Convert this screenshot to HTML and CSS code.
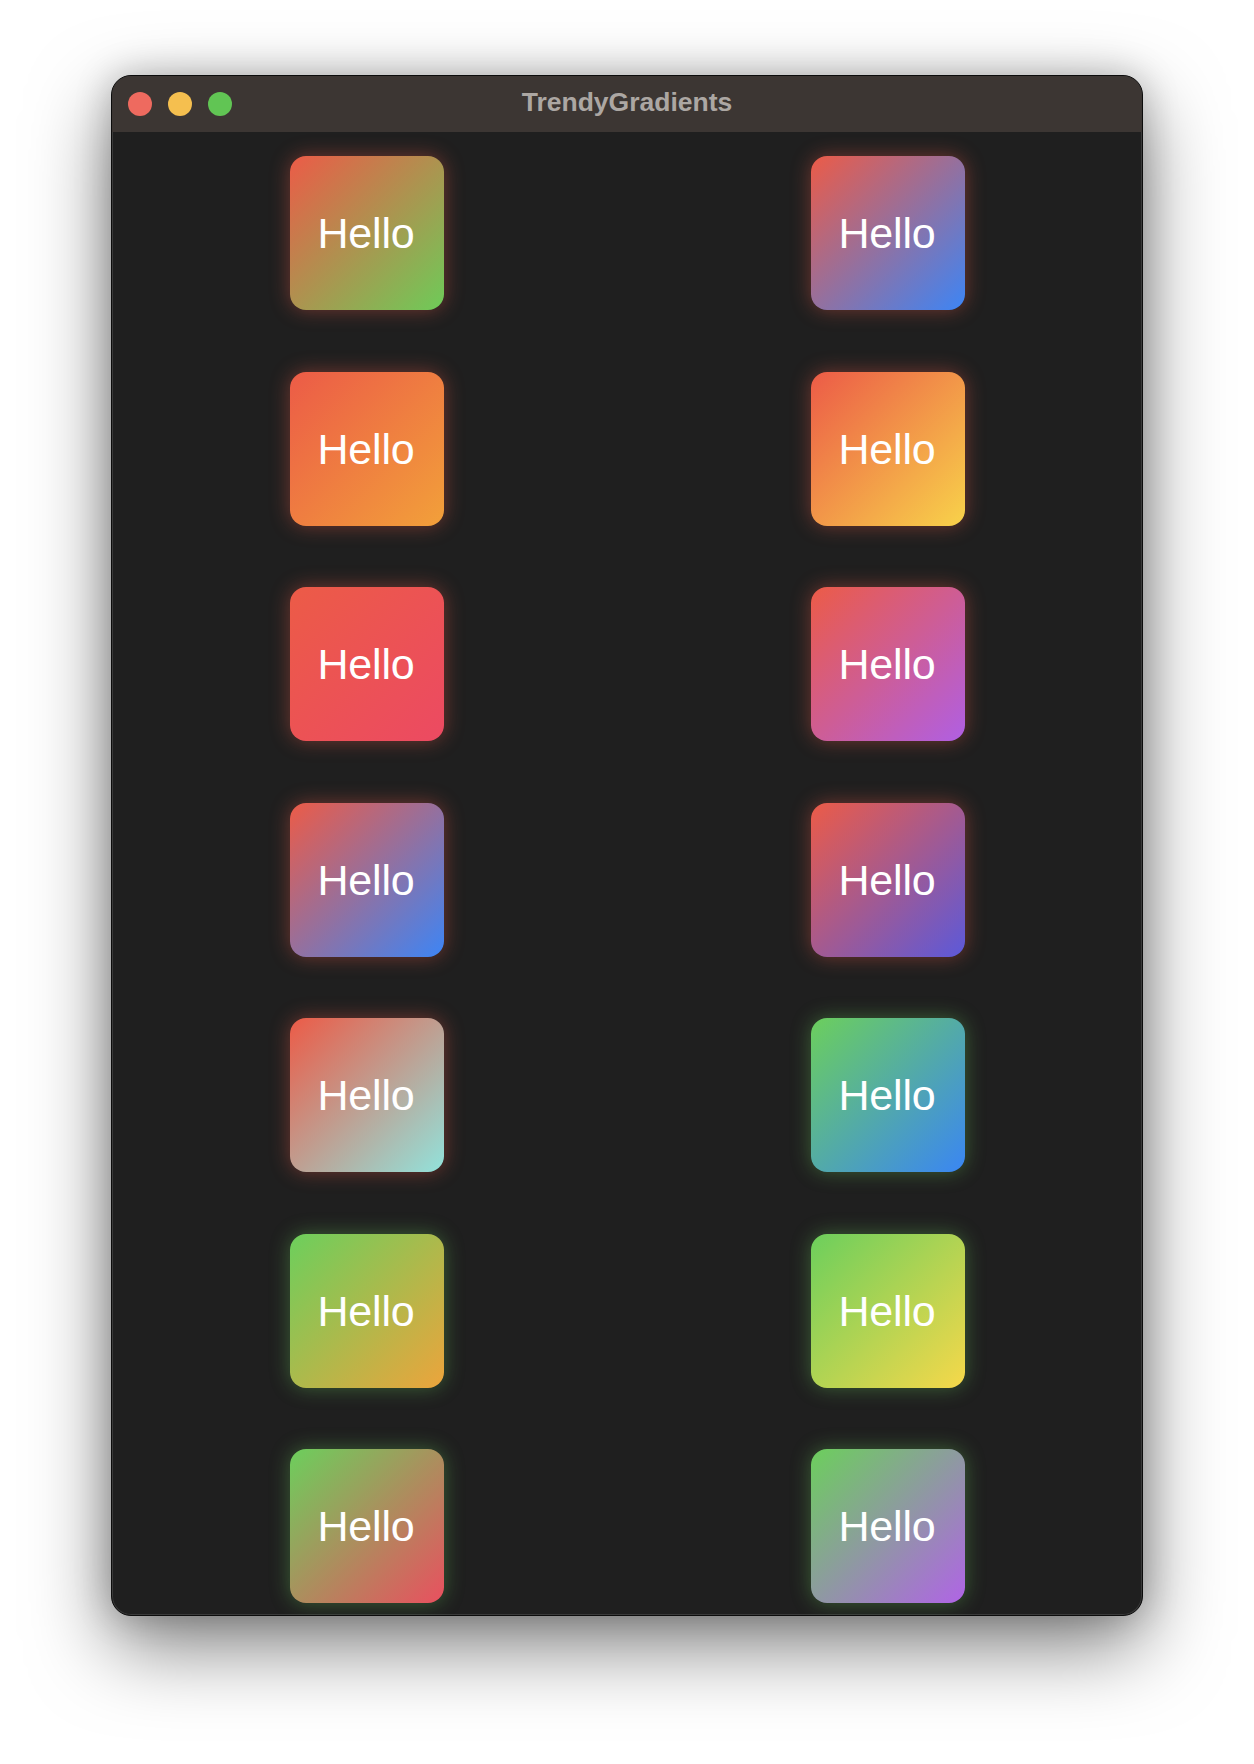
FILE: index.html
```html
<!DOCTYPE html>
<html lang="en">
<head>
<meta charset="utf-8">
<title>TrendyGradients</title>
<link rel="stylesheet" href="styles.css">
</head>
<body>
<div class="window">
  <div class="titlebar">
    <div class="lights">
      <span class="light close"></span>
      <span class="light min"></span>
      <span class="light max"></span>
    </div>
    <div class="title">TrendyGradients</div>
  </div>
  <div class="content">
    <div class="grid">
      <div class="card r g-green">Hello</div>
      <div class="card r g-blue">Hello</div>
      <div class="card r g-orange">Hello</div>
      <div class="card r g-yellow">Hello</div>
      <div class="card r g-pink">Hello</div>
      <div class="card r g-purple">Hello</div>
      <div class="card r g-blue">Hello</div>
      <div class="card r g-indigo">Hello</div>
      <div class="card r g-mint">Hello</div>
      <div class="card gr g-blue2">Hello</div>
      <div class="card gr g-orange2">Hello</div>
      <div class="card gr g-yellow2">Hello</div>
      <div class="card gr g-pink2">Hello</div>
      <div class="card gr g-purple2">Hello</div>
    </div>
  </div>
</div>
</body>
</html>
```

FILE: styles.css
```css
html, body {
  margin: 0;
  padding: 0;
  background: #ffffff;
}

body {
  width: 1254px;
  height: 1764px;
  overflow: hidden;
  font-family: "Liberation Sans", Arial, sans-serif;
}

.window {
  width: 1032px;
  height: 1541px;
  margin: 75px auto 0;
  box-sizing: border-box;
  border: 1px solid #0c0c0c;
  border-radius: 20px;
  overflow: hidden;
  background: #1f1f1f;
  display: flex;
  flex-direction: column;
  box-shadow: 0 30px 80px rgba(0, 0, 0, 0.5), 0 0 36px rgba(0, 0, 0, 0.22), inset 0 0 0 1px rgba(255, 255, 255, 0.12);
}

.titlebar {
  height: 56px;
  flex: 0 0 56px;
  background: #3c3633;
  position: relative;
  display: flex;
  align-items: center;
  justify-content: center;
}

.lights {
  position: absolute;
  left: 16px;
  top: 16px;
  display: flex;
  gap: 16px;
}

.light {
  width: 24px;
  height: 24px;
  border-radius: 50%;
  display: block;
}

.close { background: #ee6a5f; }
.min { background: #f5bf4f; }
.max { background: #61c554; }

.title {
  font-weight: bold;
  font-size: 26.5px;
  color: #aca7a3;
  line-height: 1;
  padding-bottom: 3px;
}

.content {
  flex: 1;
  overflow: hidden;
  padding-top: 24px;
}

.grid {
  display: grid;
  grid-template-columns: 510px 510px;
  column-gap: 11px;
  row-gap: 61.5px;
  justify-items: center;
}

.card {
  width: 154px;
  height: 154px;
  border-radius: 16px;
  display: flex;
  align-items: center;
  justify-content: center;
  color: #ffffff;
  font-size: 43px;
  letter-spacing: -0.2px;
  line-height: 1;
  padding-top: 1px;
  padding-right: 2px;
  box-sizing: border-box;
}

.card.r { box-shadow: 0 0 20px rgba(236, 91, 71, 0.42); }
.card.gr { box-shadow: 0 0 20px rgba(108, 204, 92, 0.38); }

.g-green { background: linear-gradient(to bottom right, #ec5b47, #6ecb58); }
.g-blue { background: linear-gradient(to bottom right, #ec5b47, #3d85f5); }
.g-orange { background: linear-gradient(to bottom right, #ec5b47, #f2a03a); }
.g-yellow { background: linear-gradient(to bottom right, #ec5b47, #f8d24a); }
.g-pink { background: linear-gradient(to bottom right, #ec5b47, #ec4a62); }
.g-purple { background: linear-gradient(to bottom right, #ec5b47, #b05fe3); }
.g-indigo { background: linear-gradient(to bottom right, #ec5b47, #5c59d9); }
.g-mint { background: linear-gradient(to bottom right, #ec5b47, #92e2db); }
.g-blue2 { background: linear-gradient(to bottom right, #6ccf5c, #3a86f3); }
.g-orange2 { background: linear-gradient(to bottom right, #6ccf5c, #eca43c); }
.g-yellow2 { background: linear-gradient(to bottom right, #6ccf5c, #f6d84a); }
.g-pink2 { background: linear-gradient(to bottom right, #6ccf5c, #e9505f); }
.g-purple2 { background: linear-gradient(to bottom right, #6ccf5c, #b064e6); }
```
